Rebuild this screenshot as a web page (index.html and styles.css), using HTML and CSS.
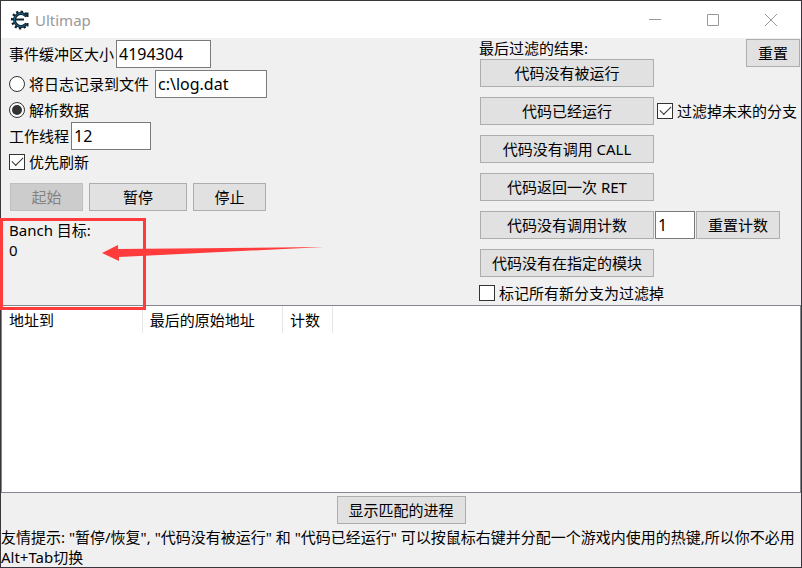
FILE: index.html
```html
<!doctype html>
<html lang="zh-CN">
	<head>
		<meta charset="UTF-8" />
		<meta name="viewport" content="width=device-width, initial-scale=1.0" />
		<title>Ultimap</title>
		<link rel="stylesheet" href="styles.css">
	</head>

	<body>
		<div class="window">
			<header class="title-bar">
				<svg class="logo" viewBox="0 0 20 20" aria-hidden="true">
					<path class="logo-teeth" d="M16 5A7.5 7.5 0 1 0 16 15" />
					<path class="logo-ring" d="M16.5 6.5A6.5 6.5 0 1 0 16.5 13.5" />
					<path class="logo-core" d="M15.5 5.5A6.5 6.5 0 1 0 15.5 14.5" />
					<path class="logo-bar" d="M5 9.5H14M17.5 2.5V7M17.5 13V16.5" />
				</svg>
				<h1>Ultimap</h1>
				<div class="window-controls">
					<button type="button" aria-label="最小化">
						<svg viewBox="0 0 12 12"><path d="M0 5.5H12" /></svg>
					</button>
					<button type="button" aria-label="最大化">
						<svg viewBox="0 0 12 12"><path d="M.5 .5H11.5V11.5H.5Z" /></svg>
					</button>
					<button type="button" aria-label="关闭">
						<svg viewBox="0 0 12 12"><path d="M0 0L12 12M12 0L0 12" /></svg>
					</button>
				</div>
			</header>

			<main class="panels">
				<section class="settings">
					<div class="row field-row">
						<label for="buffer-size">事件缓冲区大小</label>
						<input class="text-box buffer-size" id="buffer-size" type="text" value="4194304" />
					</div>
					<div class="row field-row">
						<label class="option">
							<input type="radio" name="mode" />
							将日志记录到文件
						</label>
						<input class="text-box log-file" type="text" value="c:\log.dat" aria-label="日志文件" />
					</div>
					<div class="row option-row">
						<label class="option">
							<input type="radio" name="mode" checked />
							解析数据
						</label>
					</div>
					<div class="row worker-row">
						<label for="workers">工作线程</label>
						<input class="text-box workers" id="workers" type="text" value="12" />
					</div>
					<div class="row option-row">
						<label class="option">
							<input type="checkbox" checked />
							优先刷新
						</label>
					</div>
					<div class="actions">
						<button class="button" type="button" disabled>起始</button>
						<button class="button wide" type="button">暂停</button>
						<button class="button" type="button">停止</button>
					</div>
					<div class="targets">
						<div>Banch 目标:</div>
						<div>0</div>
					</div>
				</section>

				<section class="filters">
					<div class="filter-top">
						<div>
							<div class="caption">最后过滤的结果:</div>
							<button class="button filter" type="button">代码没有被运行</button>
						</div>
						<button class="button reset" type="button">重置</button>
					</div>
					<div class="filter-row">
						<button class="button filter" type="button">代码已经运行</button>
						<label class="option">
							<input type="checkbox" checked />
							过滤掉未来的分支
						</label>
					</div>
					<div class="filter-row">
						<button class="button filter" type="button">代码没有调用 CALL</button>
					</div>
					<div class="filter-row">
						<button class="button filter" type="button">代码返回一次 RET</button>
					</div>
					<div class="filter-row">
						<button class="button filter" type="button">代码没有调用计数</button>
						<input class="text-box count" type="text" value="1" aria-label="计数" />
						<button class="button reset-count" type="button">重置计数</button>
					</div>
					<div class="filter-row">
						<button class="button filter" type="button">代码没有在指定的模块</button>
					</div>
					<label class="option mark-new">
						<input type="checkbox" />
						标记所有新分支为过滤掉
					</label>
				</section>
			</main>

			<div class="list">
				<table>
					<thead>
						<tr>
							<th class="col-address">地址到</th>
							<th class="col-address">最后的原始地址</th>
							<th class="col-count">计数</th>
						</tr>
					</thead>
				</table>
			</div>

			<footer>
				<button class="button show-matches" type="button">显示匹配的进程</button>
				<p>友情提示: "暂停/恢复", "代码没有被运行" 和 "代码已经运行" 可以按鼠标右键并分配一个游戏内使用的热键,所以你不必用<br />Alt+Tab切换</p>
			</footer>

			<!-- red marker box and arrow -->
			<svg class="marker" viewBox="0 0 330 92" aria-hidden="true">
				<rect x="1.5" y="1.5" width="143" height="89" />
				<path d="M102 35L118 27V31L324 29L119 39V43Z" />
			</svg>
		</div>
	</body>
</html>
```

FILE: styles.css
```css
* {
	box-sizing: border-box;
}

body {
	margin: 0;
	font: 15px/20px "Noto Sans", "Noto Sans CJK SC", sans-serif;
	color: #000;
}

button,
input {
	margin: 0;
	font: inherit;
	color: inherit;
}

.window {
	position: relative;
	display: flex;
	flex-direction: column;
	min-height: 100vh;
	border: 1px solid #39353a;
	background: #f0f0f0;
}

/* Title bar */
.title-bar {
	display: flex;
	align-items: center;
	height: 37px;
	padding-left: 9px;
	background: #fff;
}

.logo {
	width: 20px;
	height: 20px;
	fill: none;
}

.logo-teeth {
	stroke: #10242f;
	stroke-width: 4;
	stroke-dasharray: 2 2;
}

.logo-ring {
	stroke: #10242f;
	stroke-width: 3;
}

.logo-core {
	stroke: #176b98;
	stroke-width: 1;
}

.logo-bar {
	stroke: #10242f;
	stroke-width: 2;
}

h1 {
	margin: 0 auto 0 5px;
	font-size: 15px;
	font-weight: 400;
	color: #999;
}

.window-controls {
	display: flex;
	padding-right: 1px;
}

.window-controls button {
	display: grid;
	place-items: center;
	width: 58px;
	height: 36px;
	padding: 0;
	border: 0;
	background: none;
}

.window-controls svg {
	width: 12px;
	height: 12px;
	fill: none;
	stroke: #999;
}

/* Shared controls */
.button {
	width: 73px;
	height: 28px;
	padding: 0;
	border: 1px solid #adadad;
	background: #e1e1e1;
	white-space: nowrap;
}

.button:disabled {
	border-color: #bfbfbf;
	background: #ccc;
	color: #838383;
}

.button.wide {
	width: 98px;
}

.text-box {
	height: 28px;
	padding: 0 2px;
	border: 1px solid #7a7a7a;
	border-radius: 0;
	background: #fff;
	font-size: 16px;
}

.option {
	display: flex;
	align-items: center;
	gap: 4px;
	white-space: nowrap;
}

input[type="radio"],
input[type="checkbox"] {
	display: grid;
	place-items: center;
	flex: none;
	width: 16px;
	height: 16px;
	border: 1px solid #333;
	background: #fff;
	appearance: none;
}

input[type="radio"] {
	border-radius: 50%;
}

input[type="radio"]:checked::before {
	content: "";
	width: 10px;
	height: 10px;
	border-radius: 50%;
	background: #333;
}

input[type="checkbox"]:checked::before {
	content: "";
	width: 10px;
	height: 5px;
	border: solid #333;
	border-width: 0 0 1px 1px;
	transform: translateY(-2px) rotate(-45deg);
}

/* Panels */
.panels {
	display: flex;
	justify-content: space-between;
}

.settings {
	padding: 2px 0 0 8px;
}

.row {
	display: flex;
	align-items: center;
	white-space: nowrap;
}

.field-row {
	height: 28px;
	gap: 2px;
}

.field-row + .field-row {
	margin-top: 2px;
}

.field-row .option {
	margin-right: 4px;
}

.option-row {
	height: 24px;
}

.worker-row {
	gap: 2px;
}

.buffer-size {
	width: 95px;
}

.log-file {
	width: 112px;
}

.workers {
	width: 80px;
}

.actions {
	display: flex;
	gap: 6px;
	margin: 9px 0 9px 1px;
}

.filters {
	width: 322px;
	padding-bottom: 2px;
}

.filter-top {
	display: flex;
	align-items: flex-start;
	justify-content: space-between;
	margin-bottom: 10px;
}

.caption {
	margin-bottom: 1px;
}

.button.filter {
	width: 174px;
	margin-left: 1px;
}

.button.reset {
	width: 54px;
	margin: 1px 1px 0 0;
}

.filter-row {
	display: flex;
	gap: 1px;
	margin-bottom: 10px;
}

.filter-row .option {
	margin-left: 2px;
}

.count {
	width: 40px;
}

.button.reset-count {
	width: 84px;
}

.mark-new {
	margin-top: -4px;
}

/* Branch list */
.list {
	flex: 1;
	border: 1px solid #828790;
	background: #fff;
}

table {
	table-layout: fixed;
	width: 331px;
	border-collapse: collapse;
}

th {
	height: 27px;
	padding: 0 0 0 7px;
	border-right: 1px solid #e5e5e5;
	font-weight: 400;
	text-align: left;
}

.col-address {
	width: 140px;
}

.col-count {
	width: 50px;
}

footer {
	padding-top: 3px;
	text-align: center;
}

.button.show-matches {
	display: block;
	width: 129px;
	margin: 0 auto;
}

footer p {
	margin: 3px 0 0;
	text-align: left;
	white-space: nowrap;
}

.marker {
	position: absolute;
	top: 217px;
	left: -1px;
	width: 330px;
	height: 92px;
	pointer-events: none;
}

.marker rect {
	fill: none;
	stroke: #ff3b3b;
	stroke-width: 3;
}

.marker path {
	fill: #ff3b3b;
}
```
